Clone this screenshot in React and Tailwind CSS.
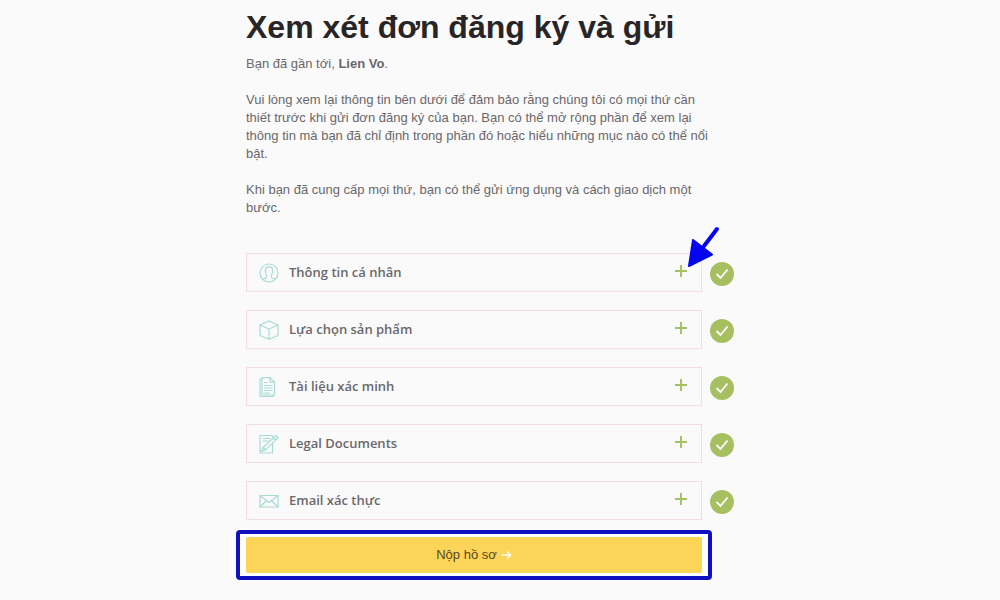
import React, { useState } from "react";

const iconProps = {
  width: 20,
  height: 20,
  viewBox: "0 0 20 20",
  fill: "none",
  stroke: "currentColor",
  strokeWidth: 1.2,
  strokeLinecap: "round",
  strokeLinejoin: "round",
  "aria-hidden": true,
};

function PersonIcon() {
  return (
    <svg {...iconProps}>
      <circle cx="10" cy="10" r="9" />
      <path d="M4 16.500c.8-1 2.600-1.200 3.400-1.900.7-.7.500-1.700 0-2.600C6.700 10.800 6.300 9.500 6.300 7.700 6.300 5.200 7.800 3.900 10 3.900s3.700 1.300 3.700 3.800c0 1.800-.4 3.100-1.100 4.300-.5.900-.7 1.900 0 2.600.8.700 2.600.9 3.400 1.900" />
    </svg>
  );
}

function BoxIcon() {
  return (
    <svg {...iconProps}>
      <path d="M10 1 19 5v10.500L10 19.300 1 15.500V5z" />
      <path d="M1 5l9 4 9-4M10 9v10" />
    </svg>
  );
}

function DocumentIcon() {
  return (
    <svg {...iconProps}>
      <path d="M3 .700h8l4.500 4.500V18H3z" />
      <path d="M11 .700v4.500h4.500M3 2H1v17.500h13V18" />
      <path d="M5.500 5.500h3M5.500 8.500h7.500M5.500 11h7.500M5.500 13.500h7.500M5.500 16h5" />
    </svg>
  );
}

function LegalIcon() {
  return (
    <svg {...iconProps}>
      <path d="M13.500 9.500V19H1V1.500h12.500v1.500" />
      <path d="M4 4.500h7M4 7h5" />
      <path d="M2.500 17.500l1.800-4.300L16.800 1.800l2.200 2L6.800 15.600zM14.500 4l2.200 2M4.300 13.200l2.500 2.400" />
    </svg>
  );
}

function MailIcon() {
  return (
    <svg {...iconProps}>
      <path d="M1 4.500h18v11.500H1z" />
      <path d="M1 4.500l9 7 9-7M1 16l6.500-6.300M19 16l-6.500-6.300" />
    </svg>
  );
}

const sections = [
  { id: "personal", title: "Thông tin cá nhân", Icon: PersonIcon },
  { id: "product", title: "Lựa chọn sản phẩm", Icon: BoxIcon },
  { id: "verification", title: "Tài liệu xác minh", Icon: DocumentIcon },
  { id: "legal", title: "Legal Documents", Icon: LegalIcon },
  { id: "email", title: "Email xác thực", Icon: MailIcon },
];

function SectionRow({ title, Icon, open, onToggle }) {
  return (
    <li className="flex items-center gap-2">
      <button
        type="button"
        aria-expanded={open}
        onClick={onToggle}
        className="flex h-[39px] min-w-0 flex-1 items-center border border-[#f3dde1] pr-[14px] pl-3 text-left"
      >
        <span className="text-[#a9dad4]">
          <Icon />
        </span>
        <span className="mb-0.5 ml-[10px] flex-1 font-['Open_Sans','Noto_Sans',sans-serif] text-[13px] leading-5 font-semibold text-[#6a686b]">
          {title}
        </span>
        <svg className="mb-1" width="12" height="12" viewBox="0 0 12 12" stroke="#a3c263" strokeWidth="2" aria-hidden="true">
          <path d={open ? "M0 6h12" : "M0 6h12M6 0v12"} />
        </svg>
      </button>
      <span role="img" aria-label="OK" className="mt-0.5 flex size-6 items-center justify-center rounded-full bg-[#a6bf61]">
        <svg width="14" height="12" viewBox="0 0 14 12" fill="none" stroke="#fff" strokeWidth="1.800" aria-hidden="true">
          <path d="M1.500 6 5.500 10 12.500 1.500" />
        </svg>
      </span>
    </li>
  );
}

export default function App() {
  const [openId, setOpenId] = useState(null);

  return (
    <div className="min-h-screen bg-[#f9f9f9] pr-[100px] pl-[168px] font-['Liberation_Sans',Arial,sans-serif]">
      <main className="min-h-screen bg-[#fbfafb] pl-[78px]">
        <div className="max-w-[488px] pt-[7px] pb-5 text-[13px] leading-[18px] text-[#69676a]">
          <h1 className="text-[32px] leading-10 font-bold whitespace-nowrap text-[#282527]">
            Xem xét đơn đăng ký và gửi
          </h1>
          <div className="mt-2 mr-5 flex flex-col gap-[18px]">
            <p>
              Bạn đã gần tới, <strong>Lien Vo</strong>.
            </p>
            <p>
              Vui lòng xem lại thông tin bên dưới để đảm bảo rằng chúng tôi có
              mọi thứ cần thiết trước khi gửi đơn đăng ký của bạn. Bạn có thể mở
              rộng phần để xem lại thông tin mà bạn đã chỉ định trong phần đó
              hoặc hiểu những mục nào có thể nổi bật.
            </p>
            <p>
              Khi bạn đã cung cấp mọi thứ, bạn có thể gửi ứng dụng và cách giao
              dịch một bước.
            </p>
          </div>

          <div className="relative mt-9">
            <ul className="flex flex-col gap-[18px]">
              {sections.map((s) => (
                <SectionRow
                  key={s.id}
                  title={s.title}
                  Icon={s.Icon}
                  open={openId === s.id}
                  onToggle={() => setOpenId(openId === s.id ? null : s.id)}
                />
              ))}
            </ul>
            {/* pointer to the expand control */}
            <svg
              className="pointer-events-none absolute -top-7 right-3.5"
              width="34"
              height="42"
              viewBox="0 0 34 42"
              aria-hidden="true"
            >
              <path d="M31 4 18 21" stroke="#0505f0" strokeWidth="4" strokeLinecap="round" />
              <path d="M7 15 26 29.500 3 41z" fill="#0505f0" stroke="#0505f0" strokeWidth="2" strokeLinejoin="round" />
            </svg>
          </div>

          <div className="relative mt-[17px] mr-8">
            <div className="pointer-events-none absolute -inset-x-2.5 -inset-y-[7px] rounded border-4 border-[#1010c0] bg-white" />
            <button
              type="button"
              className="relative flex h-9 w-full items-center justify-center gap-1 rounded-xs bg-[#fcd558] text-[#57461f]"
            >
              Nộp hồ sơ
              <svg width="11" height="10" viewBox="0 0 11 10" fill="none" stroke="#fff" strokeWidth="1.500" aria-hidden="true">
                <path d="M0 5h9.500M6 1.500 9.500 5 6 8.500" />
              </svg>
            </button>
          </div>
        </div>
      </main>
    </div>
  );
}
